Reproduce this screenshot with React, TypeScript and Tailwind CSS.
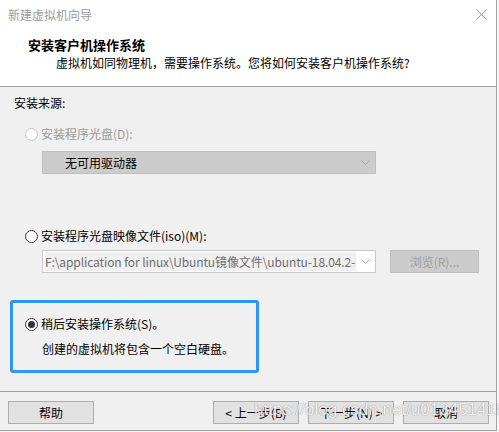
import React from "react";

function Radio({ checked = false, disabled = false }: { checked?: boolean; disabled?: boolean }) {
  return (
    <span
      className={
        "flex h-[13px] w-[13px] shrink-0 items-center justify-center rounded-full border bg-white " +
        (disabled ? "border-[#c4c4c4] bg-[#f4f4f4]" : "border-[#333333]")
      }
    >
      {checked ? <span className="h-[7px] w-[7px] rounded-full bg-[#333333]" /> : null}
    </span>
  );
}

function Chevron() {
  return (
    <svg width="9" height="5" viewBox="0 0 9 5" className="shrink-0">
      <polyline points="0.5,0.5 4.5,4.5 8.5,0.5" fill="none" stroke="#a6a6a6" strokeWidth="1" />
    </svg>
  );
}

function Btn({ children }: { children: React.ReactNode }) {
  return (
    <div className="flex h-[23px] w-[86px] items-center justify-center border border-[#adadad] bg-[#e1e1e1] text-[12px] leading-[16px] text-black">
      {children}
    </div>
  );
}

export default function App() {
  return (
    <div className="relative h-[432px] w-[499px] bg-[#f7f7f7] font-['Noto_Sans_CJK_SC','Microsoft_YaHei',sans-serif] text-[12px] leading-[16px] text-black">
      <div className="flex h-[431px] w-[497px] flex-col border-r border-b border-[#a0a0a0] bg-[#f0f0f0]">
        {/* header */}
        <div className="h-[87px] shrink-0 border-b border-[#a0a0a0] bg-white">
          <div className="flex h-[29px] items-center justify-between pl-[8px] pr-[9px]">
            <span className="text-[12px] text-[#9a9a9a]">新建虚拟机向导</span>
            <svg width="11" height="11" viewBox="0 0 11 11">
              <path d="M0.5 0.5 L10.5 10.5 M10.5 0.5 L0.5 10.5" stroke="#999999" strokeWidth="1" />
            </svg>
          </div>
          <div className="mt-[8px] pl-[28px] text-[13px] font-bold leading-[16px]">安装客户机操作系统</div>
          <div className="mt-[2px] pl-[56px]">虚拟机如同物理机，需要操作系统。您将如何安装客户机操作系统?</div>
        </div>

        {/* body */}
        <div className="flex h-[304px] shrink-0 flex-col">
          <div className="mt-[8px] pl-[14px]">安装来源:</div>

          <div className="mt-[15px] flex items-center gap-[3px] pl-[25px] text-[#9a9a9a]">
            <Radio disabled />
            <span>安装程序光盘(D):</span>
          </div>
          <div className="ml-[42px] mt-[9px] flex h-[23px] w-[334px] items-center justify-between border border-[#bfbfbf] bg-[#cccccc] pl-[22px] pr-[5px]">
            <span>无可用驱动器</span>
            <Chevron />
          </div>

          <div className="mt-[54px] flex items-center gap-[3px] pl-[25px]">
            <Radio />
            <span>安装程序光盘映像文件(iso)(M):</span>
          </div>
          <div className="mt-[6px] flex items-center">
            <div className="ml-[42px] flex h-[23px] w-[334px] items-center border border-[#c8c8c8] bg-white pl-[2px] pr-[5px]">
              <span className="h-[19px] w-[311px] overflow-hidden whitespace-nowrap bg-[#f0f0f0] leading-[19px] tracking-[-0.1px] text-[#6d6d6d]">
                F:\application for linux\Ubuntu镜像文件\ubuntu-18.04.2-desktop-amd64.iso
              </span>
              <span className="ml-auto">
                <Chevron />
              </span>
            </div>
            <div className="ml-[14px] flex h-[23px] w-[89px] items-center justify-center border border-[#bfbfbf] bg-[#cccccc] text-[#a0a0a0]">
              浏览(R)...
            </div>
          </div>

          <div className="ml-[10px] mt-[27px] h-[73px] w-[249px] rounded-[3px] border-[3px] border-[#2e95f5]">
            <div className="mt-[13px] flex items-center gap-[3px] pl-[12px]">
              <Radio checked />
              <span>稍后安装操作系统(S)。</span>
            </div>
            <div className="mt-[9px] pl-[29px]">创建的虚拟机将包含一个空白硬盘。</div>
          </div>
        </div>

        {/* footer */}
        <div className="flex h-[39px] shrink-0 items-start justify-between border-t border-[#a0a0a0] pl-[8px] pr-[7px] pt-[9px]">
          <Btn>帮助</Btn>
          <div className="flex gap-[9px]">
            <Btn>&lt; 上一步(B)</Btn>
            <Btn>下一步(N) &gt;</Btn>
            <Btn>取消</Btn>
          </div>
        </div>
      </div>

      {/* csdn watermark */}
      <div className="pointer-events-none absolute left-[254px] top-[400px] whitespace-nowrap font-['Liberation_Sans',Arial,sans-serif] text-[17px] leading-[20px] text-white/90 [text-shadow:0_0_1px_rgba(0,0,0,0.55)]">
        https://blog.csdn.net/u013451418
      </div>
    </div>
  );
}
